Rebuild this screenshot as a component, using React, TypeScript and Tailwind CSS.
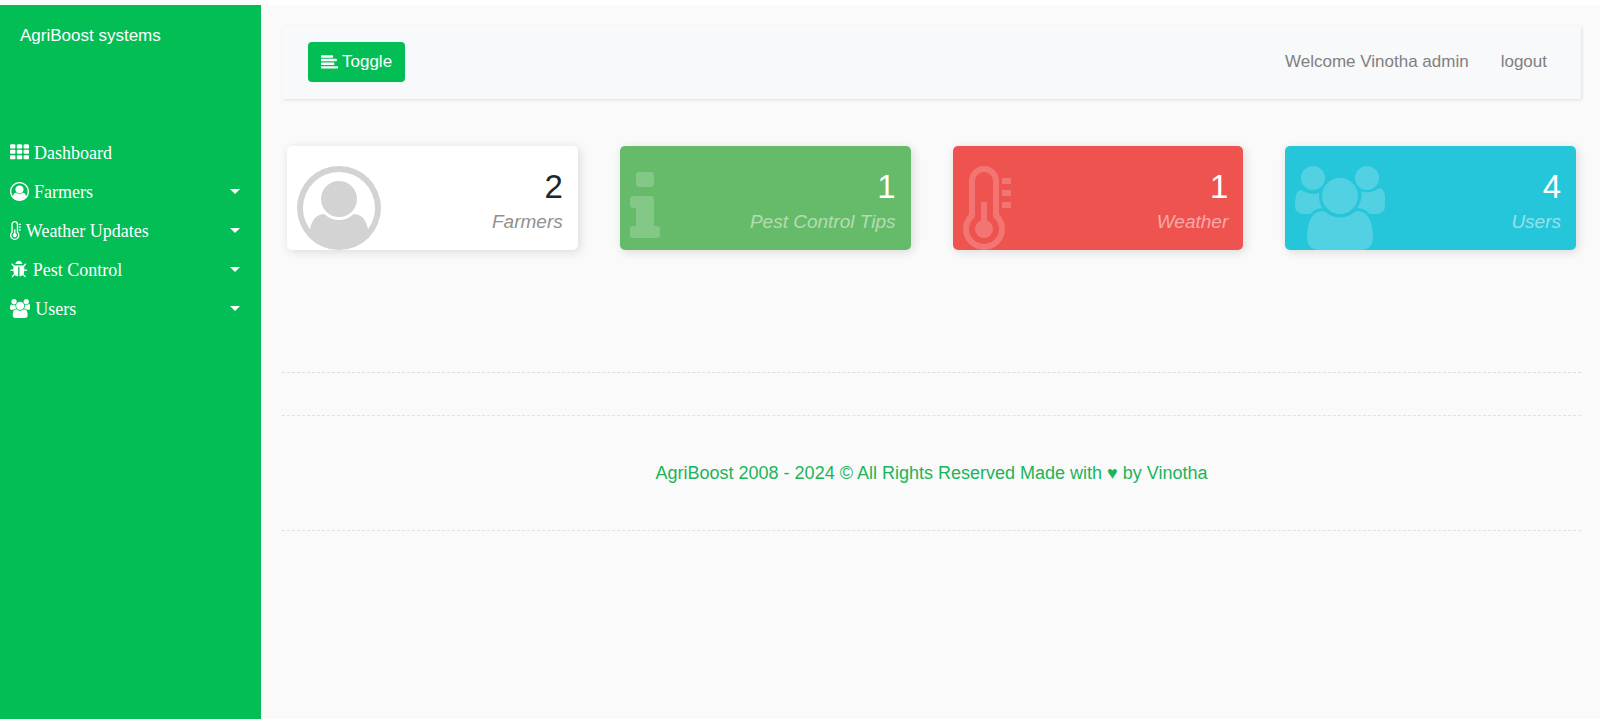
import React, { useState } from "react";

type Glyph = { box: string; d: string };

const glyphs: Record<string, Glyph> = {
  th: {
    box: "0 0 1792 1792",
    d: [0, 640, 1280]
      .flatMap((x) =>
        [128, 640, 1152].map(
          (y) =>
            `M${x + 512} ${y + 96}v192q0 40-28 68t-68 28h-320q-40 0-68-28t-28-68v-192q0-40 28-68t68-28h320q40 0 68 28t28 68z`
        )
      )
      .join(""),
  },
  user: {
    box: "0 0 1792 1792",
    d: "M896 0q182 0 348 71t286 191 191 286 71 348q0 181-70.5 347t-190.5 286-286 191.5-349 71.5-349-71-285.5-191.5-190.5-286-71-347.5 71-348 191-286 286-191 348-71zm619 1351q149-205 149-455 0-156-61-298t-164-245-245-164-298-61-298 61-245 164-164 245-61 298q0 250 149 455 66-327 306-327 131 128 313 128t313-128q240 0 306 327zm-235-647q0-159-112.5-271.5t-271.5-112.5-271.5 112.5-112.5 271.5 112.5 271.5 271.5 112.5 271.5-112.5 112.5-271.5z",
  },
  thermometer: {
    box: "0 0 1024 1792",
    d: "M640 1344q0 80-56 136t-136 56-136-56-56-136q0-60 35-110t93-71v-395h128v395q58 21 93 71t35 110zm128 0q0-77-34-144t-94-112v-768q0-80-56-136t-136-56-136 56-56 136v768q-60 45-94 112t-34 144q0 133 93.5 226.5t226.5 93.5 226.5-93.5 93.5-226.5zm128 0q0 185-131.5 316.5t-316.5 131.5-316.5-131.5-131.5-316.5q0-182 128-313v-711q0-133 93.5-226.5t226.5-93.5 226.5 93.5 93.5 226.5v711q128 131 128 313zm128-576v128h-192v-128h192zm0-256v128h-192v-128h192zm0-256v128h-192v-128h192z",
  },
  bug: {
    box: "0 0 1664 1792",
    d: "M1632 960q0 26-19 45t-45 19h-224q0 171-67 290l208 209q19 19 19 45t-19 45q-18 19-45 19t-45-19l-198-197q-5 5-15 13t-42 28.5-65 36.5-82 29-97 13v-896h-128v896q-51 0-101.5-13.5t-87-33-66-39-43.5-32.5l-15-14-183 207q-20 21-48 21-24 0-43-16-19-18-20.5-44.5t15.5-46.5l202-227q-58-114-58-274h-224q-26 0-45-19t-19-45 19-45 45-19h224v-294l-173-173q-19-19-19-45t19-45 45-19 45 19l173 173h844l173-173q19-19 45-19t45 19 19 45-19 45l-173 173v294h224q26 0 45 19t19 45zm-480-576h-640q0-133 93.5-226.5t226.5-93.5 226.5 93.5 93.5 226.5z",
  },
  users: {
    box: "0 0 1920 1792",
    d: "M593 896q-162 5-265 128h-134q-82 0-138-40.5t-56-118.5q0-353 124-353 6 0 43.5 21t97.5 42.5 119 21.5q67 0 133-23-5 37-5 66 0 159 93 293zm1071 637q0 120-73 189.5t-194 69.5h-874q-121 0-194-69.5t-73-189.5q0-53 3.5-103.5t14-109 26.5-108.5 43-97.5 62-81 85.5-53.5 111.5-20q10 0 43 21.5t73 48 107 48 135 21.5 135-21.5 107-48 73-48 43-21.5q61 0 111.5 20t85.5 53.5 62 81 43 97.5 26.5 108.5 14 109 3.5 103.5zm-1024-1277q0 106-75 181t-181 75-181-75-75-181 75-181 181-75 181 75 75 181zm704 384q0 159-112.5 271.5t-271.5 112.5-271.5-112.5-112.5-271.5 112.5-271.5 271.5-112.5 271.5 112.5 112.5 271.5zm576 225q0 78-56 118.5t-138 40.5h-134q-103-123-265-128 93-134 93-293 0-29-5-66 66 23 133 23 59 0 119-21.5t97.5-42.5 43.5-21q124 0 124 353zm-128-609q0 106-75 181t-181 75-181-75-75-181 75-181 181-75 181 75 75 181z",
  },
  info: {
    box: "0 0 640 1792",
    d: "M640 1344v128q0 26-19 45t-45 19h-512q-26 0-45-19t-19-45v-128q0-26 19-45t45-19h64v-384h-64q-26 0-45-19t-19-45v-128q0-26 19-45t45-19h384q26 0 45 19t19 45v576h64q26 0 45 19t19 45zm-128-1152v192q0 26-19 45t-45 19h-256q-26 0-45-19t-19-45v-192q0-26 19-45t45-19h256q26 0 45 19t19 45z",
  },
  align: {
    box: "0 0 1792 1792",
    d: "M1792 1344v128q0 26-19 45t-45 19h-1664q-26 0-45-19t-19-45v-128q0-26 19-45t45-19h1664q26 0 45 19t19 45zm-384-384v128q0 26-19 45t-45 19h-1280q-26 0-45-19t-19-45v-128q0-26 19-45t45-19h1280q26 0 45 19t19 45zm256-384v128q0 26-19 45t-45 19h-1536q-26 0-45-19t-19-45v-128q0-26 19-45t45-19h1536q26 0 45 19t19 45zm-384-384v128q0 26-19 45t-45 19h-1152q-26 0-45-19t-19-45v-128q0-26 19-45t45-19h1152q26 0 45 19t19 45z",
  },
};

function Icon({ name, className }: { name: string; className: string }) {
  const glyph = glyphs[name];
  return (
    <svg viewBox={glyph.box} fill="currentColor" aria-hidden="true" className={`w-auto shrink-0 ${className}`}>
      <path d={glyph.d} />
    </svg>
  );
}

const menu = [
  { label: "Dashboard", icon: "th", expands: false },
  { label: "Farmers", icon: "user", expands: true },
  { label: "Weather Updates", icon: "thermometer", expands: true },
  { label: "Pest Control", icon: "bug", expands: true },
  { label: "Users", icon: "users", expands: true },
];

const cards = [
  { label: "Farmers", count: 2, icon: "user", box: "bg-white", value: "text-[#212529]", caption: "text-[#909090]", tint: "text-[#d3d3d3]" },
  { label: "Pest Control Tips", count: 1, icon: "info", box: "bg-[#66bb6a]", value: "text-white", caption: "text-white/50", tint: "text-white/20" },
  { label: "Weather", count: 1, icon: "thermometer", box: "bg-[#ef5350]", value: "text-white", caption: "text-white/50", tint: "text-white/20" },
  { label: "Users", count: 4, icon: "users", box: "bg-[#26c6da]", value: "text-white", caption: "text-white/50", tint: "text-white/20" },
];

export default function App() {
  const [open, setOpen] = useState(true);

  return (
    <div className="flex min-h-screen flex-col bg-white pt-[5px] font-['Liberation_Sans',Arial,sans-serif] text-[17px] leading-6">
      <div className="flex flex-1 bg-[#fafafa]">
        {open && (
          <aside className="w-[261px] shrink-0 bg-[#02be55] text-white">
            <h1 className="px-5 pt-[19px]">AgriBoost systems</h1>
            <nav className="mt-[85px] font-['Liberation_Serif','Times_New_Roman',serif] text-[18px]">
              <ul>
                {menu.map((item) => (
                  <li key={item.label}>
                    <a href="#" className="flex h-[39px] items-center gap-[5px] pr-[21px] pl-[10px]">
                      <Icon name={item.icon} className="h-[19px]" />
                      <span>{item.label}</span>
                      {item.expands && (
                        <svg viewBox="0 0 10 5" fill="currentColor" aria-hidden="true" className="ml-auto h-[5px] w-[10px]">
                          <path d="M0 0h10L5 5z" />
                        </svg>
                      )}
                    </a>
                  </li>
                ))}
              </ul>
            </nav>
          </aside>
        )}

        <main className="min-w-0 flex-1 pt-[21px] pr-[19px] pl-[21px]">
          <header className="flex h-[73px] items-center justify-between bg-[#f8f9fa] px-[26px] pb-px shadow-[1px_1px_3px_rgba(0,0,0,0.1)]">
            <button
              type="button"
              onClick={() => setOpen(!open)}
              className="flex h-10 items-center gap-1 rounded-[4px] bg-[#02be55] px-[13px] text-white"
            >
              <Icon name="align" className="h-[17px]" />
              Toggle
            </button>
            <div className="flex gap-8 pr-2 text-[#808080]">
              <a href="#">Welcome Vinotha admin</a>
              <a href="#">logout</a>
            </div>
          </header>

          <section className="mt-[47px] grid grid-cols-4 gap-[42px] px-[5px]">
            {cards.map((card) => (
              <article
                key={card.label}
                className={`flex h-[104px] items-end justify-between rounded-[5px] pl-[10px] shadow-[2px_2px_10px_#dadada] ${card.box}`}
              >
                <Icon name={card.icon} className={`h-[84px] ${card.tint}`} />
                <div className="flex flex-col items-end self-start pt-[23px] pr-[15px]">
                  <span className={`text-[33px] leading-9 ${card.value}`}>{card.count}</span>
                  <span className={`mt-[5px] text-[19px] italic leading-6 ${card.caption}`}>{card.label}</span>
                </div>
              </article>
            ))}
          </section>

          <hr className="mt-[122px] border-t border-dashed border-[#dddddd]" />
          <footer className="mt-[42px] border-y border-dashed border-[#e2e2e2] py-[45px] text-center text-[18px] text-[#1cb45b]">
            <p>AgriBoost 2008 - 2024 © All Rights Reserved Made with ♥ by Vinotha</p>
          </footer>
        </main>
      </div>
    </div>
  );
}
